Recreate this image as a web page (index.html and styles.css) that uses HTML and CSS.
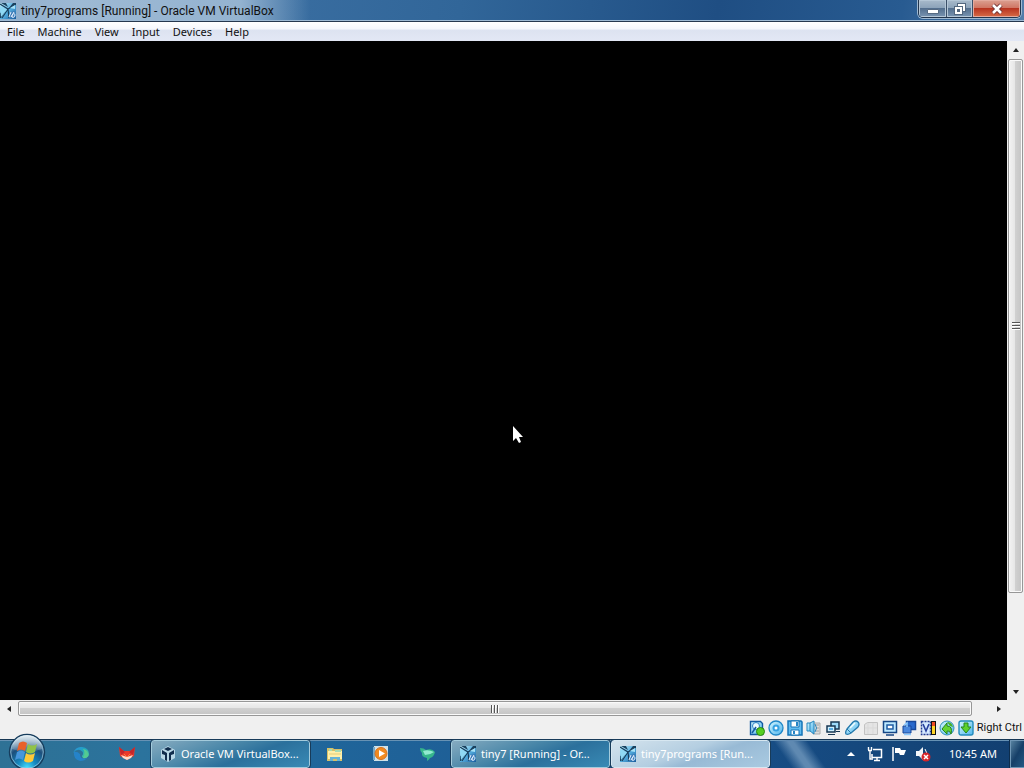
FILE: index.html
```html
<!DOCTYPE html>
<html lang="en">
<head>
<meta charset="utf-8">
<title>tiny7programs [Running] - Oracle VM VirtualBox</title>
<link rel="stylesheet" href="styles.css">
</head>
<body>
<svg class="defs" aria-hidden="true">
  <defs>
    <linearGradient id="vm-blue" x1="0" y1="0" x2="1" y2="1"><stop offset="0" stop-color="#c9f1fb"/><stop offset=".5" stop-color="#54aee0"/><stop offset="1" stop-color="#185b9c"/></linearGradient>
    <linearGradient id="device" x1="0" y1="0" x2="1" y2="1"><stop offset="0" stop-color="#d5f7ff"/><stop offset="1" stop-color="#4fb4ec"/></linearGradient>
    <radialGradient id="orb" cx=".5" cy=".95" r=".9"><stop offset="0" stop-color="#45e0ff"/><stop offset=".3" stop-color="#1588bf"/><stop offset=".65" stop-color="#1c4f7c"/><stop offset="1" stop-color="#87adc4"/></radialGradient>
    <linearGradient id="gloss" x1="0" y1="0" x2="0" y2="1"><stop offset="0" stop-color="#fff" stop-opacity=".75"/><stop offset="1" stop-color="#fff" stop-opacity=".12"/></linearGradient>
    <linearGradient id="swirl" x1="0" y1="0" x2="1" y2="1"><stop offset="0" stop-color="#2b8fe0"/><stop offset=".5" stop-color="#22a6bd"/><stop offset="1" stop-color="#58d68a"/></linearGradient>
    <symbol id="vm" viewBox="0 0 16 16">
      <path d="M0 0h16v16H0z" fill="url(#vm-blue)"/>
      <path d="M1 0h5l2 4zM9 5l4-5h3v1zM0 10l6-3-5 8H0z" fill="#1b425f"/>
      <path d="M0 1l8 5 8-5M8 6L2 15M8 6l1 9" fill="none" stroke="#173e5c" stroke-width="1.200"/>
      <path d="M0 3l7 3.500L1 14z" fill="#8fd8f4"/>
      <path d="M10 5l5-3v4z" fill="#a5e2f8"/>
      <path d="M9 15l1-6 5-1v7z" fill="#3f7db8"/>
      <path d="M9 14l2-5M11 14l3-5M12 14c0-4 3-4 3-2s-2 3-3 2" fill="none" stroke="#e1efff"/>
    </symbol>
  </defs>
</svg>

<header class="titlebar">
  <svg class="icon"><use href="#vm"/></svg>
  <h1 class="title">tiny7programs [Running] - Oracle VM VirtualBox</h1>
  <div class="window-buttons">
    <button class="win-btn" aria-label="Minimize"><svg viewBox="0 0 16 16"><path d="M2.500 8.500h11v4h-11z" fill="#fff" stroke="#566b83"/></svg></button>
    <button class="win-btn restore" aria-label="Restore"><svg viewBox="0 0 16 16"><path d="M5 2h9v9h-3v3H2V5h3z" fill="#53677f"/><path d="M6 3h7v7h-2V5H6z" fill="#fff"/><path d="M3 6h7v7H3z" fill="#fff"/><path d="M5 8h3v3H5z" fill="#53677f"/></svg></button>
    <button class="win-btn close" aria-label="Close"><svg viewBox="0 0 16 16"><path d="M4 4l8 8M12 4l-8 8" stroke="#6d3030" stroke-width="4.500"/><path d="M4 4l8 8M12 4l-8 8" stroke="#fff" stroke-width="2.600"/></svg></button>
  </div>
</header>

<nav class="menubar" aria-label="Menu">
  <button>File</button><button>Machine</button><button>View</button><button>Input</button><button>Devices</button><button>Help</button>
</nav>

<main class="viewport">
  <div class="screen">
    <svg class="pointer" viewBox="0 0 12 19"><path d="M1 1v15l3-3 3 5 2-1-2-5h4z" fill="#fff"/></svg>
  </div>
  <div class="scroll vertical">
    <button class="arrow" aria-label="Scroll up"><svg viewBox="0 0 8 8"><path d="M1 6l3-4 3 4z"/></svg></button>
    <div class="track"><div class="thumb"><span class="grip"></span></div></div>
    <button class="arrow" aria-label="Scroll down"><svg viewBox="0 0 8 8"><path d="M1 2l3 4 3-4z"/></svg></button>
  </div>
  <div class="scroll horizontal">
    <button class="arrow" aria-label="Scroll left"><svg viewBox="0 0 8 8"><path d="M6 1L2 4l4 3z"/></svg></button>
    <div class="track"><div class="thumb"><span class="grip"></span></div></div>
    <button class="arrow" aria-label="Scroll right"><svg viewBox="0 0 8 8"><path d="M2 1l4 3-4 3z"/></svg></button>
  </div>
</main>

<footer class="statusbar">
  <svg class="icon" viewBox="0 0 16 16"><path d="M1.500 1.500h10l2 2v11h-12z" fill="url(#device)" stroke="#125aa0" stroke-width="1.400"/><circle cx="7" cy="6" r="3.500" fill="#e9fbff" stroke="#2e83c6"/><path d="M3 13l4-6" stroke="#125aa0" stroke-width="1.500"/><circle cx="11.500" cy="11.500" r="4" fill="#57cf22" stroke="#29860f"/></svg>
  <svg class="icon" viewBox="0 0 16 16"><circle cx="8" cy="8" r="7" fill="url(#device)" stroke="#1f87c8" stroke-width="1.300"/><circle cx="8" cy="8" r="3.500" fill="#35a1e2"/><circle cx="8" cy="8" r="1.500" fill="#fff"/></svg>
  <svg class="icon" viewBox="0 0 16 16"><path d="M1 1h13l1 1v13H1z" fill="#62bcf0" stroke="#1674b7" stroke-width="1.500"/><path d="M4 1h8v6H4zM4 10h8v5H4z" fill="#fff" stroke="#1674b7"/><path d="M9 2h2v4H9zM6 11h2v3H6z" fill="#2785c5"/></svg>
  <svg class="icon" viewBox="0 0 16 16"><path d="M7 3h7v11H7z" fill="#ddd" stroke="#aaa"/><path d="M10 5h3M10 8h3M10 11h3" stroke="#a2a2a2"/><path d="M1 3h3l4-2v13l-4-3H1z" fill="url(#device)" stroke="#2686bd"/><path d="M4 3v8M9 4q3 4 0 8" fill="none" stroke="#2686bd"/></svg>
  <svg class="icon" viewBox="0 0 16 16"><path d="M6 2h8v7H6z" fill="#9edbfa" stroke="#173753" stroke-width="1.500"/><path d="M2 6h8v6H2z" fill="#cff0ff" stroke="#173753" stroke-width="1.500"/><path d="M3 14.500h7M11 11.500h4" fill="none" stroke="#173753"/><path d="M4 8h4v2H4z" fill="#55ace5"/></svg>
  <svg class="icon" viewBox="0 0 16 16"><path d="M2 14q-1-2 1-5l6-7q3-2 5 0 2 2 0 5l-7 6q-3 2-5 1z" fill="url(#device)" stroke="#2579ac" stroke-width="1.300"/><path d="M3 9l4 4" stroke="#2579ac"/><path d="M6 8l5-5" stroke="#f1fdff" stroke-width="1.500"/></svg>
  <svg class="icon" viewBox="0 0 16 16"><path d="M1.500 4.500l3-2h10v12h-13z" fill="#e4e4e4" stroke="#c2c2c2"/><path d="M2 8h12M5 3v11M10 3v11" stroke="#d9d9d9"/></svg>
  <svg class="icon" viewBox="0 0 16 16"><path d="M1.500 1.500h13v11h-13z" fill="#bce8ff" stroke="#164786" stroke-width="1.500"/><path d="M5 5h6v4H5z" fill="#fff" stroke="#1e5ba4" stroke-width="1.500"/><path d="M4 15h8" stroke="#164786" stroke-width="1.500"/></svg>
  <svg class="icon" viewBox="0 0 16 16"><path d="M5.500 1.500h9v8h-9z" fill="#2868cc" stroke="#17479a" stroke-width="1.500"/><path d="M2 6h8v7H2z" fill="#4987dd" stroke="#17479a"/><path d="M3 5l3-2v4M3 14.500h7" stroke="#8dcbff" stroke-width="1.500" fill="none"/></svg>
  <svg class="icon" viewBox="0 0 16 16"><path d="M1.500 1.500h9v13h-9z" fill="#d5e9ff" stroke="#223a91" stroke-width="1.500" stroke-dasharray="2 1"/><path d="M3 4l3 7 3-7" fill="none" stroke="#273e9d" stroke-width="1.600"/><path d="M11 1h5v14h-5z" fill="#111"/><path d="M12 2h3v4h-3z" fill="#ec4a25"/><path d="M12 6h3v8h-3z" fill="#ffd429"/></svg>
  <svg class="icon" viewBox="0 0 16 16"><circle cx="8" cy="8" r="7" fill="url(#device)" stroke="#3190ba"/><path d="M3 9l5-6v3q6 0 4 8-1-4-4-3v3z" fill="#65d334" stroke="#27851a"/><path d="M8 2q5 0 6 5l-3-1z" fill="#46b32b"/></svg>
  <svg class="icon" viewBox="0 0 16 16"><rect x="1" y="1" width="14" height="14" rx="2" fill="url(#device)" stroke="#228bbd" stroke-width="1.400"/><path d="M6 3h4v4h3l-5 6-5-6h3z" fill="#5dd12c" stroke="#25861d"/></svg>
  <span class="host-key">Right Ctrl</span>
</footer>

<div class="taskbar">
  <button class="start" aria-label="Start"><svg class="orb" viewBox="0 0 38 38"><circle cx="19" cy="19" r="17.500" fill="url(#orb)" stroke="#173d5d" stroke-width="1.400"/><circle cx="19" cy="19" r="16.300" fill="none" stroke="#a3cee2" stroke-opacity=".7"/><path d="M4 16a15 14 0 0 1 30 0q-15 6-30 0z" fill="url(#gloss)"/><path d="M11 10q4-3 8 0l-2 8q-4-3-8 0z" fill="#e8612a"/><path d="M20 11q4 3 9 0l-2 8q-5 3-9 0z" fill="#91c348"/><path d="M9 19q4-3 8 0l-2 8q-4-3-8 0z" fill="#4796dc"/><path d="M18 20q4 3 9 0l-2 8q-5 3-9 0z" fill="#ffc938"/></svg></button>
  <button class="pin" aria-label="Edge"><svg class="icon" viewBox="0 0 16 16"><path d="M0 7Q3 0 9 1q7 1 7 7 0 3-4 4-3 0-3-2 3-4-2-6-4-1-7 3z" fill="url(#swirl)"/><path d="M1 6q-1 7 6 9 5 0 7-3-7 2-7-4-3-3-6-2z" fill="#2583c9"/><path d="M10 3q6 1 5 7-2 3-5 2 3-5 0-9z" fill="#54cb91"/></svg></button>
  <button class="pin" aria-label="Fox browser"><svg class="icon" viewBox="0 0 16 16"><path d="M0 1l5 4h6l5-4-1 9-7 4-7-4z" fill="#e83a2c"/><path d="M0 1l2 8 4-3zM16 1l-2 8-4-3z" fill="#c5262b"/><path d="M2 9l6 2 6-2-2 3-4 2-4-2z" fill="#ffdac7"/><path d="M5 8l3 3 3-3" fill="none" stroke="#ff793c"/></svg></button>
  <button class="task"><svg class="icon" viewBox="0 0 16 16"><path d="M8 0l7 4v8l-7 4-7-4V4z" fill="#b7d7e7"/><path d="M2 4l5 3v8l-2-1V9L2 8zM14 4L9 7v8l2-1V9l3-1zM4 3l4-2 4 2-4 2z" fill="#102d4d"/></svg><span>Oracle VM VirtualBox...</span></button>
  <button class="pin" aria-label="File Explorer"><svg class="icon" viewBox="0 0 16 16"><path d="M0 2h6l1 1h8v12H0z" fill="#d6bf68"/><path d="M1 5h14v8H1z" fill="#fff0aa"/><path d="M2 3h3v2H2zM8 4h6v2H8z" fill="#a6dcb5"/><path d="M3 15v-4h10v4h-3v-2H6v2z" fill="#66b3d5"/><path d="M2 8h12" stroke="#e3cd78"/></svg></button>
  <button class="pin" aria-label="Media Player"><svg class="icon" viewBox="0 0 16 16"><path d="M1 0h14v15H1z" fill="#d2e1e6"/><path d="M0 1h2v13H0z" fill="#76a9ca"/><circle cx="8" cy="7.500" r="6" fill="#f18a20" stroke="#d5701c"/><path d="M6 4l6 3.500L6 11z" fill="#fff"/></svg></button>
  <button class="pin" aria-label="Messenger"><svg class="icon" viewBox="0 0 16 16"><path d="M1 2q4 0 6 2 6-2 9 2-1 5-5 6-1 2-3 3V12Q2 11 3 7 1 5 1 2z" fill="#36b68c"/><path d="M4 5q5-2 11 1-4 3-9 3z" fill="#91ead0"/></svg></button>
  <button class="task"><svg class="icon"><use href="#vm"/></svg><span>tiny7 [Running] - Or...</span></button>
  <button class="task active"><svg class="icon"><use href="#vm"/></svg><span>tiny7programs [Run...</span></button>
  <div class="tray">
    <button class="tray-btn" aria-label="Show hidden icons"><svg class="icon" viewBox="0 0 16 16"><path d="M4 10l4-4 4 4z" fill="#fff"/></svg></button>
    <button class="tray-btn" aria-label="Network"><svg class="icon" viewBox="0 0 16 16"><path d="M6 3.500h8.500v8H5V8M7 14.500h6M10 12v2" fill="none" stroke="#fff" stroke-width="1.500"/><path d="M1.500 1v3M4.500 1v3M1 4.500h4M3 5v8h3" fill="none" stroke="#fff" stroke-width="1.400"/></svg></button>
    <button class="tray-btn" aria-label="Action Center"><svg class="icon" viewBox="0 0 16 16"><path d="M2 1v14" stroke="#fff" stroke-width="1.500"/><path d="M4 2h5l1 2h5l-2 5H9L8 7H4z" fill="#fff"/></svg></button>
    <button class="tray-btn" aria-label="Volume muted"><svg class="icon" viewBox="0 0 16 16"><path d="M1 5h3l4-4v13l-4-4H1z" fill="#f3f6fa"/><path d="M10 3q3 4 1 8" fill="none" stroke="#fff"/><circle cx="11" cy="11" r="4.500" fill="#d6252b"/><path d="M9 9l4 4M13 9l-4 4" stroke="#fff" stroke-width="1.500"/></svg></button>
    <time class="clock">10:45 AM</time>
    <button class="show-desktop" aria-label="Show desktop"></button>
  </div>
</div>
</body>
</html>
```

FILE: styles.css
```css
* { box-sizing: border-box; }
body {
  margin: 0;
  height: 100vh;
  display: flex;
  flex-direction: column;
  overflow: hidden;
  background: #f0f0f0;
  color: #111;
  font: 11px/16px "Noto Sans", "Open Sans", sans-serif;
}
button {
  margin: 0;
  padding: 0;
  border: 0;
  background: none;
  color: inherit;
  font: inherit;
}
svg { display: block; flex: none; }
.defs { position: absolute; width: 0; height: 0; }
.icon { width: 16px; height: 16px; }

.titlebar {
  flex: none;
  height: 22px;
  display: flex;
  align-items: center;
  gap: 5px;
  border-bottom: 1px solid #26384f;
  box-shadow: inset 0 -1px #9db9d3;
  background:
    linear-gradient(90deg, #8fafcd 0, #9db9d4 80px, #94b3d0 240px, transparent 310px),
    linear-gradient(100deg, #4578ab, #316699 45%, #1f4e83 70%, #285b91 88%, #527daa);
}
.title {
  margin: 0;
  flex: 1;
  font: 12px/16px Roboto, "Noto Sans", sans-serif;
  white-space: nowrap;
}
.window-buttons {
  align-self: flex-start;
  display: flex;
  height: 18px;
  margin-right: 3px;
  border: 1px solid #23364e;
  border-top: 0;
  border-radius: 0 0 5px 5px;
  overflow: hidden;
  box-shadow: 0 0 0 1px #9fb9d2;
}
.win-btn {
  width: 28px;
  display: grid;
  place-items: center;
  border-right: 1px solid #3b4f68;
  background: linear-gradient(#a8bacb, #8ba2b9 48%, #546f8e 50%, #7995b2);
  box-shadow: inset 0 0 0 1px #b4c6d6;
}
.win-btn svg { width: 16px; height: 16px; }
.restore { width: 26px; }
.close {
  width: 47px;
  border-right: 0;
  background: linear-gradient(#dba091, #cf7462 48%, #b83420 50%, #d76c47);
  box-shadow: inset 0 0 0 1px #e3aa9e;
}

.menubar {
  flex: none;
  height: 19px;
  display: flex;
  align-items: center;
  gap: 13px;
  padding: 0 7px;
  background: linear-gradient(#fff, #f5f7fc 35%, #dde3f1 45%, #e3e8f5);
}

.viewport {
  flex: 1;
  min-height: 0;
  display: grid;
  grid-template: minmax(0, 1fr) 17px / minmax(0, 1fr) 17px;
}
.screen { position: relative; background: #000; }
.pointer { position: absolute; left: 50.8%; top: 58.2%; width: 12px; height: 19px; }

.scroll { display: flex; background: #f0f0f0; }
.vertical { flex-direction: column; }
.arrow { width: 17px; height: 17px; display: grid; place-items: center; }
.arrow svg { width: 8px; height: 8px; fill: #222; }
.track { flex: 1; display: flex; }
.vertical .track { flex-direction: column; padding: 1px 1px 0; }
.horizontal .track { padding: 1px; }
.thumb {
  display: grid;
  place-items: center;
  border: 1px solid #979797;
  border-radius: 2px;
  box-shadow: inset 0 0 0 1px #fafafa;
}
.vertical .thumb { height: 85.6%; background: linear-gradient(90deg, #f3f3f3, #e6e6e6 45%, #d0d0d0 50%, #c4c4c4); }
.horizontal .thumb { width: 98.2%; background: linear-gradient(#f3f3f3, #e6e6e6 45%, #d0d0d0 50%, #c4c4c4); }
.grip { width: 8px; height: 8px; }
.vertical .grip { background: repeating-linear-gradient(#555 0 1px, #fff 1px 2px, transparent 2px 3px); }
.horizontal .grip { background: repeating-linear-gradient(90deg, #555 0 1px, #fff 1px 2px, transparent 2px 3px); }

.statusbar {
  flex: none;
  height: 22px;
  display: flex;
  align-items: center;
  justify-content: flex-end;
  gap: 3px;
  padding-right: 2px;
}
.host-key { font-family: Roboto, "Noto Sans", sans-serif; white-space: nowrap; }

.taskbar {
  flex: none;
  height: 29px;
  display: flex;
  align-items: stretch;
  border-top: 1px solid #163653;
  box-shadow: inset 0 1px #6792b4;
  color: #fff;
  background: linear-gradient(90deg, #2e7195, #2b739d 14%, #20659a 32%, #1d5b94 55%, #164b82 78%, #123f70);
}
.start { position: relative; width: 58px; }
.orb { position: absolute; left: 8px; top: -7px; width: 38px; height: 38px; }
.pin { width: 46px; display: grid; place-items: center; }
.task {
  width: 159px;
  display: flex;
  align-items: center;
  gap: 5px;
  padding: 0 8px;
  border: 1px solid #a4cbdc;
  border-radius: 3px;
  outline: 1px solid #183b59;
  background: linear-gradient(160deg, #86abc0, #4886a8 40%, #2b709c 60%, #398ab5);
  white-space: nowrap;
}
.pin + .task { margin-left: 1px; }
.task + .pin { margin-left: 2px; }
.task + .task { margin-left: 1px; }
.active {
  border-color: #d7e7f1;
  background: linear-gradient(160deg, #d4e3ed, #b4cee1 45%, #98bad5 60%, #a9cae1);
}
.tray {
  flex: 1;
  display: flex;
  align-items: center;
  justify-content: flex-end;
  gap: 8px;
  background: linear-gradient(55deg, transparent 18px, #5f89b1 30px, #5f89b1 34px, transparent 46px);
}
.tray-btn { width: 16px; }
.clock { margin: 0 5px 0 10px; white-space: nowrap; }
.show-desktop {
  align-self: stretch;
  width: 14px;
  border: 1px solid #6f96b5;
  border-right: 0;
  box-shadow: -1px 0 #0d2d4d;
  background: linear-gradient(120deg, #56819f, #163f68 50%, #245883);
}
```
